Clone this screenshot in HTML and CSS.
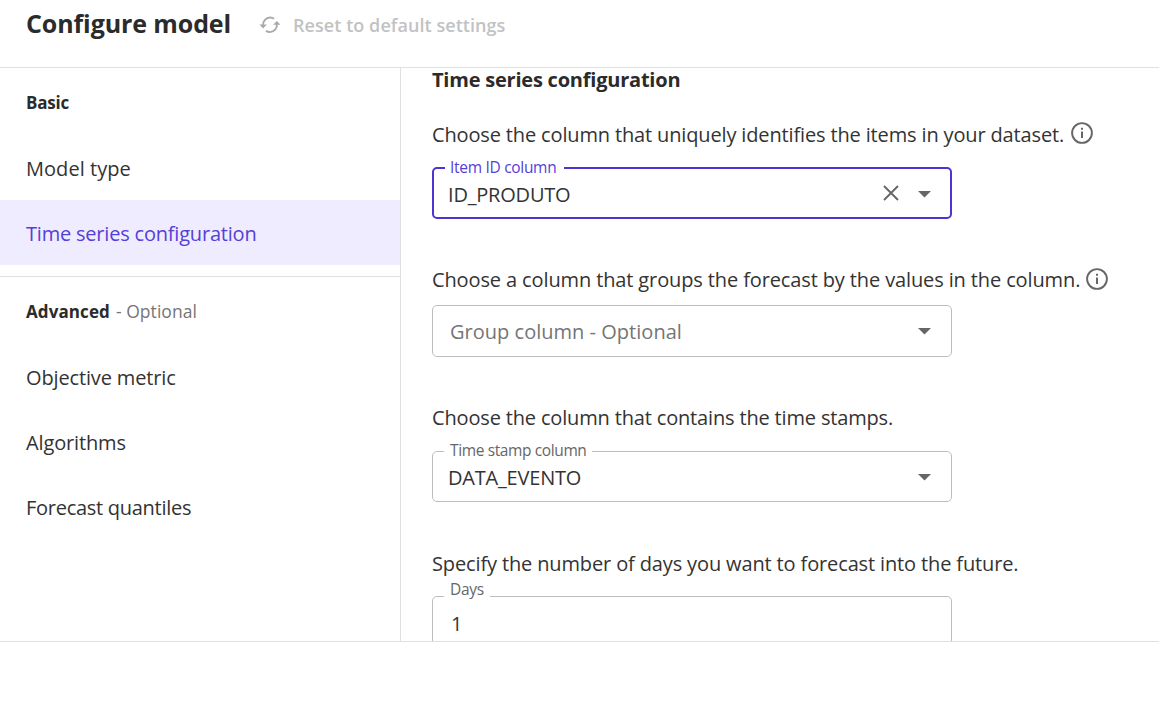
FILE: index.html
```html
<!DOCTYPE html>
<html lang="en">
<head>
<meta charset="utf-8">
<title>Configure model</title>
<link rel="stylesheet" href="styles.css">
</head>
<body>
<header class="header">
  <h1 class="title">Configure model</h1>
  <button class="reset" type="button">
    <svg class="reset-icon" width="22" height="18" viewBox="0 0 22 18" fill="none" stroke="#a9a9a9" stroke-width="1.9"><path d="M4.100 9.500C3.600 5 7.200 1.500 11 1.500c1.600 0 3 .5 4 1.300M17.900 7.800c.6 4.700-3 8.300-6.900 8.300-1.600 0-3-.5-4-1.300"/><path d="M.4 8.600h7.400L4.100 12.400zM14.100 8.800h7.400L17.900 4.900z" fill="#a9a9a9" stroke="none"/></svg>
    <span>Reset to default settings</span>
  </button>
</header>
<div class="body">
  <nav class="sidebar">
    <h2 class="group basic">Basic</h2>
    <a class="item upper model-type">Model type</a>
    <a class="item upper active">Time series configuration</a>
    <hr class="divider">
    <h2 class="group advanced"><span class="advanced-name">Advanced</span> <span class="optional">- Optional</span></h2>
    <a class="item">Objective metric</a>
    <a class="item">Algorithms</a>
    <a class="item quantiles">Forecast quantiles</a>
  </nav>
  <main class="main">
    <h2 class="section">Time series configuration</h2>
    <p class="prompt p1"><span>Choose the column that uniquely identifies the items in your dataset.</span>
      <svg class="info" width="22" height="22" viewBox="0 0 22 22"><circle cx="11" cy="11" r="9.900" fill="none" stroke="#666" stroke-width="1.900"/><path d="M10 9.500h2V16h-2zM10 5.700h2v2h-2z" fill="#666"/></svg></p>
    <div class="field focused">
      <span class="label">Item ID column</span>
      <span class="value">ID_PRODUTO</span>
      <svg class="clear" width="16" height="16" viewBox="0 0 16 16"><path d="M1 1l14 14M15 1L1 15" stroke="#666" stroke-width="1.900"/></svg>
      <svg class="caret" width="13" height="7" viewBox="0 0 13 7"><path d="M0 0h13L6.500 6.500z" fill="#666"/></svg>
    </div>
    <p class="prompt p2"><span>Choose a column that groups the forecast by the values in the column.</span>
      <svg class="info" width="22" height="22" viewBox="0 0 22 22"><circle cx="11" cy="11" r="9.900" fill="none" stroke="#666" stroke-width="1.900"/><path d="M10 9.500h2V16h-2zM10 5.700h2v2h-2z" fill="#666"/></svg></p>
    <div class="field">
      <span class="value placeholder">Group column - Optional</span>
      <svg class="caret" width="13" height="7" viewBox="0 0 13 7"><path d="M0 0h13L6.500 6.500z" fill="#666"/></svg>
    </div>
    <p class="prompt p3">Choose the column that contains the time stamps.</p>
    <div class="field stamp">
      <span class="label">Time stamp column</span>
      <span class="value">DATA_EVENTO</span>
      <svg class="caret" width="13" height="7" viewBox="0 0 13 7"><path d="M0 0h13L6.500 6.500z" fill="#666"/></svg>
    </div>
    <p class="prompt p4">Specify the number of days you want to forecast into the future.</p>
    <div class="field days">
      <span class="label">Days</span>
      <span class="value">1</span>
    </div>
  </main>
</div>
<footer class="footer"></footer>
</body>
</html>
```
FILE: styles.css
```css
* { box-sizing: border-box; margin: 0; padding: 0; }
body { width: 1159px; height: 720px; overflow: hidden; display: flex; flex-direction: column; background: #fff; color: #333; font-family: "Open Sans", sans-serif; font-size: 20px; white-space: nowrap; }
.header { height: 68px; flex: none; border-bottom: 1px solid #e0e0e0; padding: 6px 26px 0; display: flex; align-items: flex-start; gap: 28px; }
.title { font-size: 25px; line-height: 35px; font-weight: 700; color: #2b2b2b; width: 204.5px; letter-spacing: -.1px; }
.reset { border: 0; background: none; display: flex; align-items: center; gap: 12.5px; height: 38px; font: 600 18px "Open Sans", sans-serif; color: #c2c2c2; letter-spacing: .06px; }
.body { display: flex; height: 573px; flex: none; }
.sidebar { width: 401px; flex: none; border-right: 1px solid #e0e0e0; }
.group { font-size: 17px; font-weight: 700; color: #2b2b2b; padding-left: 26px; display: flex; gap: 6px; align-items: center; }
.basic { height: 67px; padding-top: 1px; letter-spacing: -.2px; }
.advanced { height: 68px; }
.advanced-name { letter-spacing: .1px; }
.optional { font-size: 17.500px; font-weight: 400; color: #757575; letter-spacing: .04px; }
.item { display: flex; align-items: center; height: 65px; padding-left: 26px; letter-spacing: -.14px; }
.upper { padding-top: 2px; }
.model-type { letter-spacing: .04px; }
.quantiles { letter-spacing: -.28px; }
.active { background: #f0ecff; color: #5440d8; letter-spacing: -.2px; }
.divider { border: 0; border-top: 1px solid #e0e0e0; margin-top: 11px; }
.main { padding-left: 31px; flex: 1; }
.section { font-size: 20px; line-height: 24px; color: #2b2b2b; font-weight: 700; height: 52px; letter-spacing: -.22px; }
.prompt { display: flex; align-items: center; gap: 7px; height: 28px; letter-spacing: -.145px; }
.info { margin-top: -2px; }
.p1 { margin-bottom: 19px; }
.p2 { margin: 46px 0 12px; letter-spacing: -.122px; gap: 6px; }
.p2 .info { margin-top: 0; }
.p3 { margin: 46px 0 20px; letter-spacing: -.162px; }
.p4 { margin: 47px 0 19px; letter-spacing: -.135px; }
.field { position: relative; width: 520px; height: 52px; border: 1px solid #bdbdbd; border-radius: 5px; display: flex; align-items: center; padding: 0 20px 0 15px; }
.focused { border: 2px solid #4b36cf; padding: 2px 19px 0 14px; }
.stamp { height: 51px; padding-top: 2px; }
.label { position: absolute; left: 11px; top: -13px; height: 22px; line-height: 22px; padding: 0 6px; background: #fff; font-size: 15.500px; color: #666; letter-spacing: -.38px; }
.focused .label { left: 11px; padding: 0 8px 0 5px; color: #5440d8; letter-spacing: -.3px; }
.days .label { top: -20px; height: 24px; line-height: 24px; letter-spacing: -.25px; }
.value { flex: 1; letter-spacing: -.2px; }
.days .value { padding: 3px 0 0 3px; }
.placeholder { color: #757575; padding-left: 2px; letter-spacing: .02px; }
.clear { margin: -2px 19px 0 0; }
.footer { position: relative; z-index: 1; flex: 1; background: #fff; border-top: 1px solid #e0e0e0; }
```
